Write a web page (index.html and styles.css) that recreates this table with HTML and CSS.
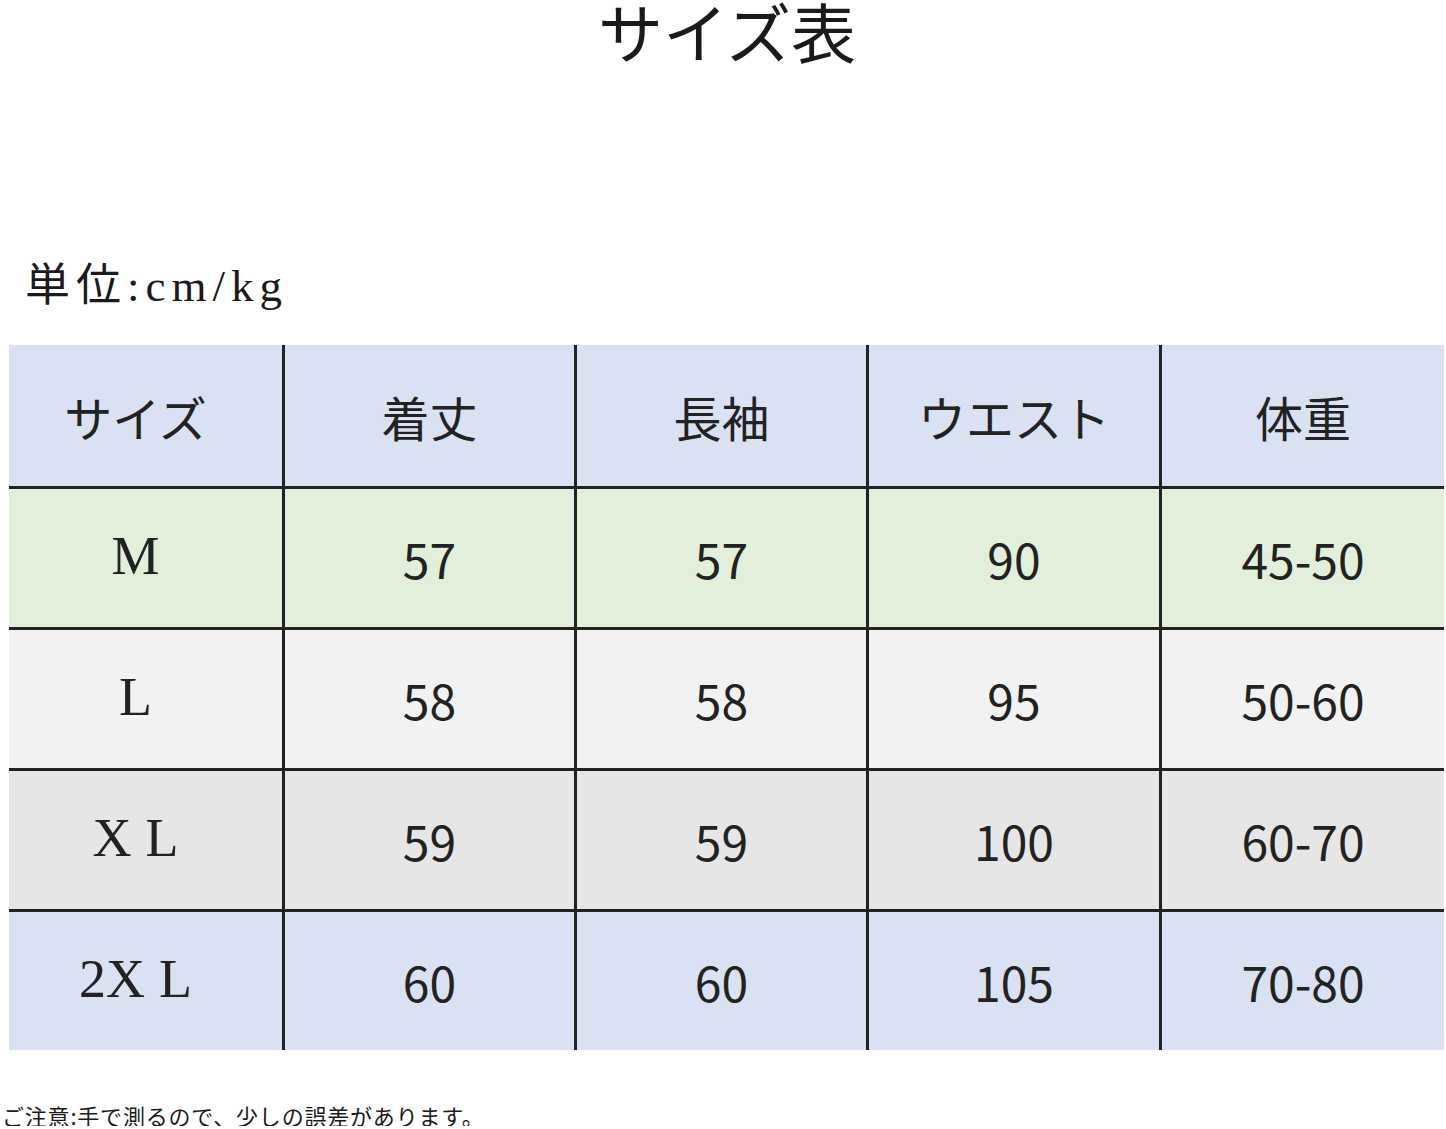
FILE: index.html
```html
<!DOCTYPE html>
<html lang="ja">
<head>
<meta charset="utf-8">
<title>サイズ表</title>
<link rel="stylesheet" href="styles.css">
</head>
<body>
<h1 class="title">サイズ表</h1>
<p class="unit">単位:cm/kg</p>
<div class="table">
  <div class="cell head first">サイズ</div>
  <div class="cell head">着丈</div>
  <div class="cell head">長袖</div>
  <div class="cell head">ウエスト</div>
  <div class="cell head">体重</div>

  <div class="cell r-m first size">M</div>
  <div class="cell r-m">57</div>
  <div class="cell r-m">57</div>
  <div class="cell r-m">90</div>
  <div class="cell r-m">45-50</div>

  <div class="cell r-l first size">L</div>
  <div class="cell r-l">58</div>
  <div class="cell r-l">58</div>
  <div class="cell r-l">95</div>
  <div class="cell r-l">50-60</div>

  <div class="cell r-xl first size"><span class="gap">X</span>L</div>
  <div class="cell r-xl">59</div>
  <div class="cell r-xl">59</div>
  <div class="cell r-xl">100</div>
  <div class="cell r-xl">60-70</div>

  <div class="cell r-2xl first size">2<span class="gap">X</span>L</div>
  <div class="cell r-2xl">60</div>
  <div class="cell r-2xl">60</div>
  <div class="cell r-2xl">105</div>
  <div class="cell r-2xl">70-80</div>
</div>
<p class="note">ご注意:手で測るので、少しの誤差があります。</p>
</body>
</html>
```
FILE: styles.css
```css
html, body {
  margin: 0;
  padding: 0;
  background: #ffffff;
}

body {
  width: 1446px;
  color: #1a1a1a;
  font-family: "Noto Sans CJK JP", sans-serif;
}

.title {
  margin: 0;
  height: 72px;
  font-family: "Liberation Serif", "Noto Sans CJK JP", serif;
  font-size: 65px;
  line-height: 72px;
  font-weight: 400;
  text-align: center;
  padding-left: 8px;
}

.unit {
  margin: 192px 0 0 25px;
  height: 45px;
  font-family: "Liberation Serif", "Noto Sans CJK JP", serif;
  font-size: 45px;
  line-height: 45px;
  letter-spacing: 6px;
}

.table {
  margin: 36px 0 0 9px;
  width: 1435px;
  display: grid;
  grid-template-columns: 273px 289px 289px 290px 282px;
  grid-template-rows: 141px 138px 138px 138px 138px;
  gap: 3px;
  background: #222222;
}

.cell {
  display: flex;
  align-items: center;
  justify-content: center;
  font-size: 48px;
  line-height: 1;
  color: #222222;
}

.first {
  padding-right: 20px;
}

.size {
  font-family: "Liberation Serif", serif;
  font-size: 54px;
  padding-bottom: 4px;
}

.gap {
  margin-right: 14px;
}

.head { background: #d9e1f2; }
.r-m { background: #e2efda; }
.r-l { background: #f2f2f2; }
.r-xl { background: #e7e6e6; }
.r-2xl { background: #d9e1f2; }

.note {
  margin: 54px 0 0 2px;
  font-size: 22px;
  line-height: 22px;
  height: 22px;
  letter-spacing: 0.8px;
}
```
